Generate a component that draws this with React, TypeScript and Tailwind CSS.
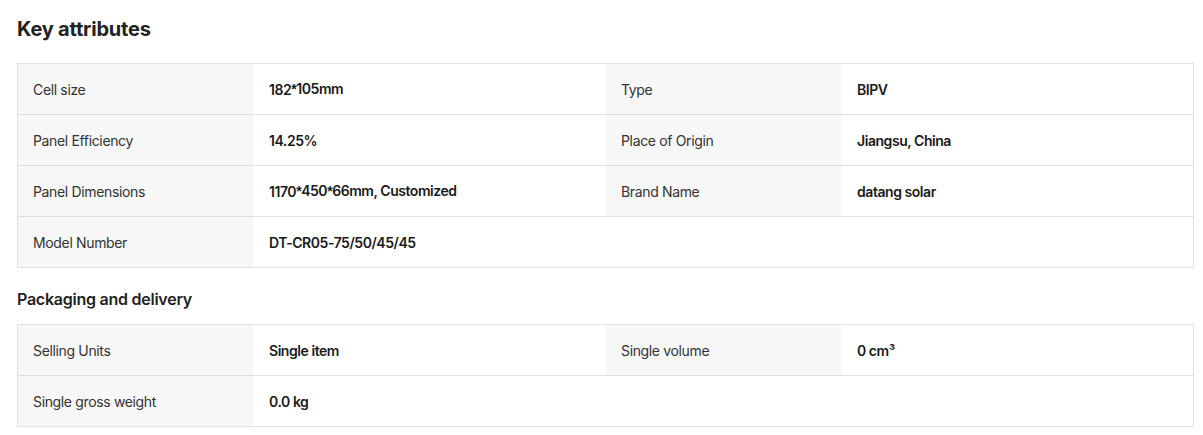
type Attr = [string, string];

const keyAttrs: Attr[][] = [
  [["Cell size", "182*105mm"], ["Type", "BIPV"]],
  [["Panel Efficiency", "14.25%"], ["Place of Origin", "Jiangsu, China"]],
  [["Panel Dimensions", "1170*450*66mm, Customized"], ["Brand Name", "datang solar"]],
  [["Model Number", "DT-CR05-75/50/45/45"]],
];

const packaging: Attr[][] = [
  [["Selling Units", "Single item"], ["Single volume", "0 cm³"]],
  [["Single gross weight", "0.0 kg"]],
];

// the asterisk in the source font sits high, like Arial's
function Value({ text }: { text: string }) {
  const parts = text.split("*");
  return (
    <>
      {parts.map((p, i) => (
        <span key={i}>
          {i > 0 && <span className="font-['Liberation_Sans',sans-serif] font-bold">*</span>}
          {p}
        </span>
      ))}
    </>
  );
}

function AttrTable({ rows }: { rows: Attr[][] }) {
  return (
    <div className="w-[1177px] border border-[#e0e0e0]">
      {rows.map((row, i) => (
        <div
          key={i}
          className={
            "grid grid-cols-[235px_353px_235px_352px] h-[50px] " +
            (i < rows.length - 1 ? "border-b border-[#e0e0e0] box-content" : "")
          }
        >
          {row.map(([label, value]) => (
            <div key={label} className="contents">
              <div className="flex items-center bg-[#f7f7f7] pl-[15px] text-[14px] tracking-[-0.35px] text-[#333]">
                {label}
              </div>
              <div className="flex items-center pl-4 text-[14px] font-semibold tracking-[-0.45px] text-[#1a1a1a]">
                <Value text={value} />
              </div>
            </div>
          ))}
        </div>
      ))}
    </div>
  );
}

export default function App() {
  return (
    <div className="bg-white pl-[17px] pt-[15px] pb-4 font-['Inter','Liberation_Sans',sans-serif]">
      <h2 className="text-[20px] leading-[28px] font-bold tracking-[-0.2px] text-[#222] mb-[20px]">
        Key attributes
      </h2>
      <AttrTable rows={keyAttrs} />
      <h3 className="mt-[19px] mb-[13px] text-[16px] leading-[24px] font-semibold tracking-[-0.25px] text-[#222]">
        Packaging and delivery
      </h3>
      <AttrTable rows={packaging} />
    </div>
  );
}
